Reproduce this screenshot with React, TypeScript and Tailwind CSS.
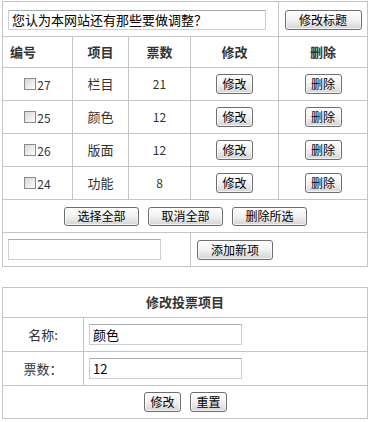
import React from "react";

const font = { fontFamily: '"Noto Sans CJK SC", "Noto Sans", sans-serif' };

function Btn({ w, h = 20, children }: { w: number; h?: number; children: React.ReactNode }) {
  return (
    <button
      type="button"
      style={{ width: w, height: h }}
      className="flex items-center justify-center rounded-[3px] border border-[#6e6e6e] bg-linear-to-b from-white via-[#f1f1f1] to-[#d4d4d4] text-[12px] leading-none text-black shadow-[inset_0_0_0_1px_rgba(255,255,255,0.7)]"
    >
      {children}
    </button>
  );
}

function Input({ w, h = 20, value }: { w: number; h?: number; value?: string }) {
  return (
    <div
      style={{ width: w, height: h }}
      className="flex items-center border border-[#cbcfd6] border-t-[#a9acb2] bg-white pl-[3px] text-[13px] leading-none text-black"
    >
      {value}
    </div>
  );
}

function Check() {
  return (
    <span className="inline-block h-[12px] w-[12px] border border-[#8a8a8a] bg-linear-to-br from-[#d6d6d6] to-white" />
  );
}

const rows = [
  { id: "27", name: "栏目", votes: "21" },
  { id: "25", name: "颜色", votes: "12" },
  { id: "26", name: "版面", votes: "12" },
  { id: "24", name: "功能", votes: "8" },
];

const cell = "flex items-center justify-center border-r border-[#c4c4c4]";

export default function App() {
  return (
    <div style={font} className="min-h-[422px] w-[370px] bg-white text-[12px] text-[#333]">
      <div className="ml-[2px] mt-[1px] w-[366px] border-l border-t border-[#c4c4c4]">
        <div className="flex h-[35px] border-b border-[#c4c4c4]">
          <div className="flex w-[276px] items-center border-r border-[#c4c4c4] pl-[5px] pt-[1px]">
            <Input w={258} value="您认为本网站还有那些要做调整？" />
          </div>
          <div className={`${cell} w-[89px] pt-[2px]`}>
            <Btn w={77}>修改标题</Btn>
          </div>
        </div>
        <div className="flex h-[31px] border-b border-[#c4c4c4] text-[13px] font-bold">
          <div className={`${cell} w-[70px] justify-start pl-[7px]`}>编号</div>
          <div className={`${cell} w-[56px]`}>项目</div>
          <div className={`${cell} w-[62px]`}>票数</div>
          <div className={`${cell} w-[88px]`}>修改</div>
          <div className={`${cell} w-[89px]`}>删除</div>
        </div>
        {rows.map((r) => (
          <div key={r.id} className="flex h-[33px] border-b border-[#c4c4c4]">
            <div className={`${cell} w-[70px]`}>
              <div className="flex items-end gap-[1px]">
                <Check />
                <span className="text-[12px] leading-[11px]">{r.id}</span>
              </div>
            </div>
            <div className={`${cell} w-[56px] text-[13px]`}>{r.name}</div>
            <div className={`${cell} w-[62px]`}>{r.votes}</div>
            <div className={`${cell} w-[88px]`}>
              <Btn w={37}>修改</Btn>
            </div>
            <div className={`${cell} w-[89px]`}>
              <Btn w={37}>删除</Btn>
            </div>
          </div>
        ))}
        <div className="flex h-[33px] items-center justify-center gap-[9px] border-b border-r border-[#c4c4c4] pl-[1px]">
          <Btn w={75} h={19}>选择全部</Btn>
          <Btn w={75} h={19}>取消全部</Btn>
          <Btn w={75} h={19}>删除所选</Btn>
        </div>
        <div className="flex h-[34px] border-b border-[#c4c4c4]">
          <div className="flex w-[188px] items-center border-r border-[#c4c4c4] pl-[5px]">
            <Input w={153} h={21} />
          </div>
          <div className="flex w-[177px] items-center border-r border-[#c4c4c4] pl-[6px]">
            <Btn w={76}>添加新项</Btn>
          </div>
        </div>
      </div>

      <div className="ml-[2px] mt-[20px] w-[366px] border-l border-t border-[#c4c4c4]">
        <div className="flex h-[30px] items-center justify-center border-b border-r border-[#c4c4c4] pb-[2px] text-[13px] font-bold">
          修改投票项目
        </div>
        <div className="flex h-[34px] border-b border-[#c4c4c4]">
          <div className={`${cell} w-[81px] text-[13px]`}>名称:</div>
          <div className="flex w-[284px] items-center border-r border-[#c4c4c4] pl-[5px]">
            <Input w={153} h={21} value="颜色" />
          </div>
        </div>
        <div className="flex h-[34px] border-b border-[#c4c4c4]">
          <div className={`${cell} w-[81px] text-[13px]`}>票数：</div>
          <div className="flex w-[284px] items-center border-r border-[#c4c4c4] pl-[5px]">
            <Input w={153} h={21} value="12" />
          </div>
        </div>
        <div className="flex h-[33px] items-center justify-center gap-[9px] border-b border-r border-[#c4c4c4] pl-[1px]">
          <Btn w={37}>修改</Btn>
          <Btn w={37}>重置</Btn>
        </div>
      </div>
    </div>
  );
}
